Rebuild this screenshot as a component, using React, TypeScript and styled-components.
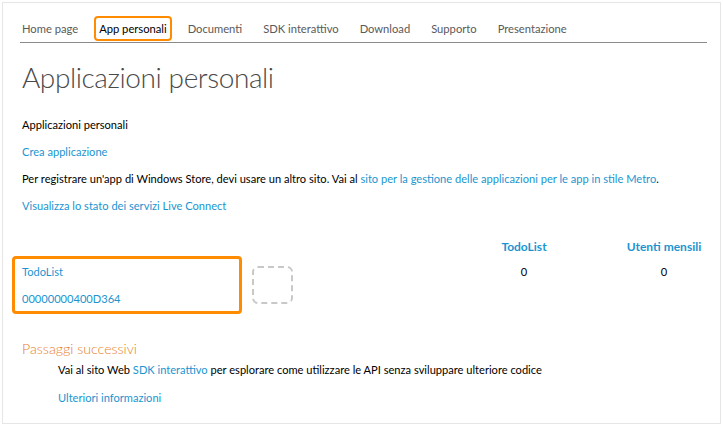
import React from "react";
import styled, { createGlobalStyle } from "styled-components";

const Global = createGlobalStyle`
  html, body { margin: 0; padding: 0; background: #fff; }
  body { font-family: Lato, "Open Sans", sans-serif; font-size: 11.1px; color: #000; }
`;

const Outer = styled.div`
  padding: 2px;
  width: 723px;
  height: 426px;
  box-sizing: border-box;
`;

const Frame = styled.div`
  border: 1px solid #e6e6e6;
  width: 719px;
  height: 422px;
  box-sizing: border-box;
  padding: 0 13px 0 17px;
`;

const NavBar = styled.nav`
  margin-top: 13px;
  padding-bottom: 1px;
  border-bottom: 1px solid #8a8a8a;
`;

const NavList = styled.div`
  display: flex;
  gap: 11px;
  margin-left: -3px;
`;

const NavItem = styled.a<{ $active?: boolean }>`
  display: flex;
  align-items: center;
  height: 25px;
  box-sizing: border-box;
  padding: 0 3px;
  border: 2px solid ${(p) => (p.$active ? "#ff8c00" : "transparent")};
  border-radius: 4px;
  color: ${(p) => (p.$active ? "#000" : "#5a5a5a")};
  font-size: 11.2px;
  text-decoration: none;
  white-space: nowrap;
`;

const Content = styled.div`
  padding-left: 2px;
`;

const Title = styled.h1`
  margin: 16px 0 0;
  font-size: 28px;
  line-height: 36px;
  font-weight: 300;
  color: #4a4a4a;
  letter-spacing: -0.4px;
`;

const Lines = styled.div`
  display: flex;
  flex-direction: column;
  gap: 11px;
  margin-top: 22px;
`;

const Line = styled.div`
  line-height: 16px;
  white-space: nowrap;
`;

const Link = styled.a`
  color: #1b95d0;
  text-decoration: none;
`;

const Table = styled.div`
  display: grid;
  grid-template-columns: 415px 194px 86px;
  margin: 25px 0 0 -10px;
`;

const Head = styled.div`
  text-align: center;
  font-size: 12px;
  font-weight: 700;
  color: #1b95d0;
  line-height: 16px;
  height: 17px;
`;

const AppCell = styled.div`
  display: flex;
  align-items: center;
  gap: 10px;
`;

const AppBox = styled.div`
  width: 230px;
  height: 58px;
  box-sizing: border-box;
  border: 3px solid #ff8c00;
  border-radius: 4px;
  padding: 5px 0 0 7px;
  display: flex;
  flex-direction: column;
  gap: 11px;
`;

const Logo = styled.div`
  width: 41px;
  height: 38px;
  box-sizing: border-box;
  border: 2px dashed #c8c8c8;
  border-radius: 6px;
`;

const Num = styled.div`
  text-align: center;
  line-height: 16px;
  padding-top: 8px;
`;

const Section = styled.h2`
  margin: 25px 0 0;
  font-size: 14.2px;
  line-height: 20px;
  font-weight: 300;
  color: #e8801f;
`;

const Indented = styled.div`
  display: flex;
  flex-direction: column;
  gap: 12px;
  margin: 3px 0 0 36px;
`;

export default function App() {
  const nav = [
    "Home page",
    "App personali",
    "Documenti",
    "SDK interattivo",
    "Download",
    "Supporto",
    "Presentazione",
  ];
  return (
    <Outer>
      <Global />
      <Frame>
        <NavBar>
          <NavList>
            {nav.map((n) => (
              <NavItem key={n} $active={n === "App personali"}>
                {n}
              </NavItem>
            ))}
          </NavList>
        </NavBar>
        <Content>
          <Title>Applicazioni personali</Title>
          <Lines>
            <Line>Applicazioni personali</Line>
            <Line>
              <Link>Crea applicazione</Link>
            </Line>
            <Line>
              Per registrare un'app di Windows Store, devi usare un altro sito. Vai al{" "}
              <Link>sito per la gestione delle applicazioni per le app in stile Metro</Link>.
            </Line>
            <Line>
              <Link>Visualizza lo stato dei servizi Live Connect</Link>
            </Line>
          </Lines>
          <Table>
            <div />
            <Head>TodoList</Head>
            <Head>Utenti mensili</Head>
            <AppCell>
              <AppBox>
                <Line>
                  <Link>TodoList</Link>
                </Line>
                <Line>
                  <Link>00000000400D364</Link>
                </Line>
              </AppBox>
              <Logo />
            </AppCell>
            <Num>0</Num>
            <Num>0</Num>
          </Table>
          <Section>Passaggi successivi</Section>
          <Indented>
            <Line>
              Vai al sito Web <Link>SDK interattivo</Link> per esplorare come utilizzare le API senza sviluppare ulteriore codice
            </Line>
            <Line>
              <Link>Ulteriori informazioni</Link>
            </Line>
          </Indented>
        </Content>
      </Frame>
    </Outer>
  );
}
